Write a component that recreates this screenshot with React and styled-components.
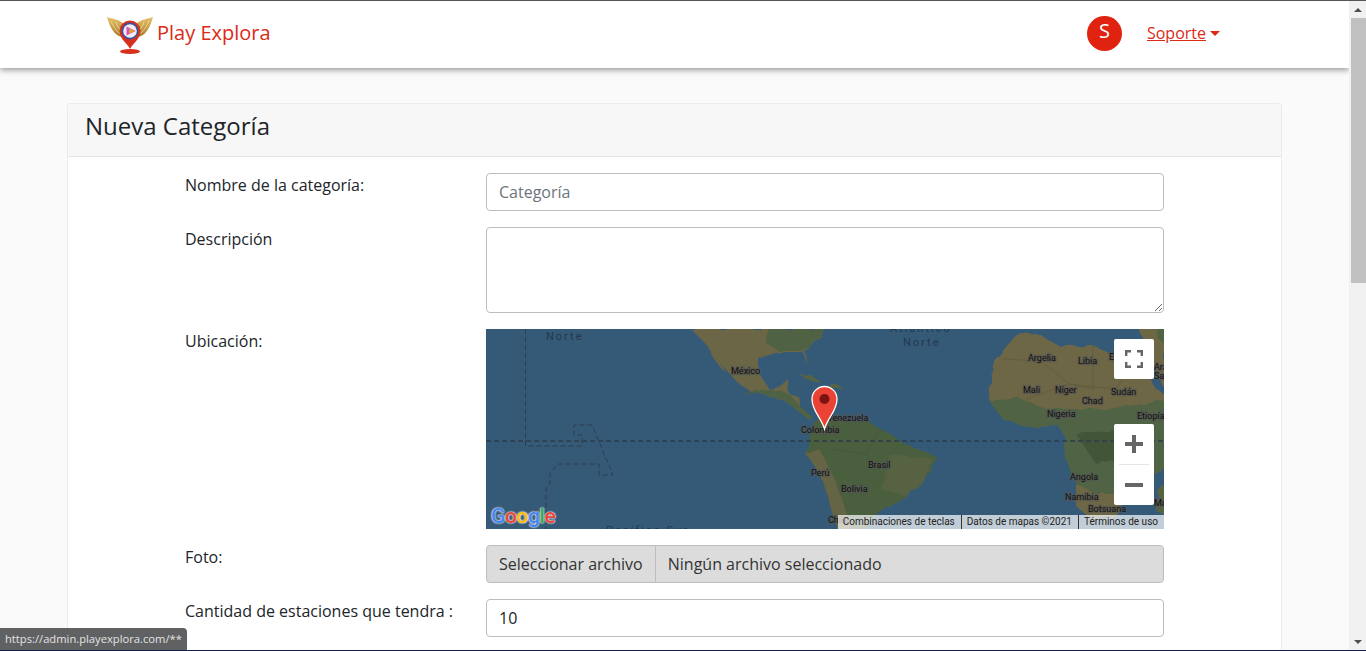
import React from "react";
import styled, { createGlobalStyle } from "styled-components";

const Global = createGlobalStyle`
  * { box-sizing: border-box; }
  html, body { margin: 0; height: 100%; overflow: hidden; }
  body {
    font-family: "Open Sans", "Liberation Sans", sans-serif;
    font-size: 16px;
    line-height: 1.5;
    color: #212529;
    background: #fafafa;
  }
`;

const Frame = styled.div`
  height: 100vh;
  display: flex;
  flex-direction: column;
  border-top: 1px solid #555;
  border-bottom: 1px solid #12204a;
`;

const Body = styled.div`
  flex: 1;
  min-height: 0;
  display: flex;
`;

const Viewport = styled.main`
  flex: 1;
  min-width: 0;
  overflow: hidden;
`;

const ScrollRail = styled.div`
  width: 17px;
  display: flex;
  flex-direction: column;
  background: #f1f1f1;
`;

const ScrollButton = styled.div`
  height: 17px;
  display: flex;
  align-items: center;
  justify-content: center;
  &::before {
    content: "";
    border-left: 4px solid transparent;
    border-right: 4px solid transparent;
    ${(p) => (p.$down ? "border-top: 4px solid #505050;" : "border-bottom: 4px solid #505050;")}
  }
`;

const ScrollThumb = styled.div`
  height: 265px;
  margin-left: 2px;
  background: #c1c1c1;
`;

const ScrollTrack = styled.div`
  flex: 1;
`;

const Nav = styled.nav`
  position: relative;
  z-index: 2;
  height: 67px;
  display: flex;
  align-items: center;
  justify-content: space-between;
  padding: 0 129px 3px 107px;
  background: white;
  box-shadow: 0 2px 6px rgba(0, 0, 0, 0.4);
`;

const Brand = styled.div`
  display: flex;
  align-items: center;
  gap: 4px;
  font-size: 20px;
  color: #dc2a16;
`;

const NavRight = styled.div`
  display: flex;
  align-items: center;
  gap: 25px;
`;

const Avatar = styled.div`
  width: 35px;
  height: 35px;
  border-radius: 50%;
  display: flex;
  align-items: center;
  justify-content: center;
  padding-bottom: 5px;
  background: #df2310;
  color: white;
  font-size: 20px;
`;

const Support = styled.a`
  display: flex;
  align-items: center;
  color: #dc2a16;
  text-decoration: underline;
  &::after {
    content: "";
    margin-left: 4px;
    border-top: 5px solid #dc2a16;
    border-left: 5px solid transparent;
    border-right: 5px solid transparent;
  }
`;

const Card = styled.section`
  margin: 35px 67px 0;
  background: white;
  border: 1px solid rgba(0, 0, 0, 0.08);
  border-radius: 4px;
`;

const CardHeader = styled.header`
  height: 53px;
  padding: 8px 17px 0;
  background: #f7f7f7;
  border-bottom: 1px solid rgba(0, 0, 0, 0.07);
  border-radius: 4px 4px 0 0;
`;

const Title = styled.h4`
  margin: 0;
  font-size: 24px;
  font-weight: 400;
  line-height: 1.2;
`;

const Form = styled.form`
  padding: 16px 0 16px 117px;
  display: grid;
  grid-template-columns: 301px 678px;
  row-gap: 16px;
`;

const Label = styled.label`
  display: block;
`;

const fieldBase = `
  display: block;
  width: 100%;
  padding: 6px 12px;
  border: 1px solid #bdbdbd;
  border-radius: 4px;
  font: inherit;
  color: #212529;
  background: white;
  outline: none;
`;

const Input = styled.input`
  ${fieldBase}
  height: 38px;
  &::placeholder { color: #6c757d; opacity: 1; }
`;

const TextArea = styled.textarea`
  ${fieldBase}
  height: 86px;
  resize: vertical;
`;

const FileBox = styled.div`
  height: 38px;
  display: flex;
  align-items: center;
  background: #dcdcdc;
  border: 1px solid #bdbdbd;
  border-radius: 4px;
  color: #333;
`;

const FileButton = styled.span`
  height: 100%;
  display: flex;
  align-items: center;
  padding: 0 12px;
  border-right: 1px solid #bdbdbd;
`;

const FileName = styled.span`
  padding: 0 12px;
`;

const MapBox = styled.div`
  position: relative;
  height: 200px;
  overflow: hidden;
  background: #355a78;
`;

const MapArt = styled.svg`
  display: block;
  width: 678px;
  height: 200px;
`;

const MapText = styled.text`
  font-family: Roboto, "Liberation Sans", sans-serif;
  font-size: 9px;
  fill: #101010;
  stroke: rgba(85, 85, 85, 0.6);
  stroke-width: 2.5px;
  paint-order: stroke;
`;

const SeaText = styled.text`
  font-family: Roboto, "Liberation Sans", sans-serif;
  font-size: 11px;
  letter-spacing: 2px;
  fill: #23384c;
`;

const MapControl = styled.div`
  position: absolute;
  right: 10px;
  top: ${(p) => p.$top}px;
  width: 40px;
  height: ${(p) => p.$height}px;
  display: flex;
  flex-direction: column;
  align-items: center;
  justify-content: center;
  background: white;
  border-radius: 2px;
`;

const ZoomPart = styled.div`
  flex: 1;
  width: 100%;
  display: flex;
  align-items: center;
  justify-content: center;
`;

const ZoomLine = styled.div`
  width: 30px;
  height: 1px;
  background: #e6e6e6;
`;

const GoogleLogo = styled.div`
  position: absolute;
  left: 5px;
  bottom: -1px;
  font-family: Roboto, "Liberation Sans", sans-serif;
  font-size: 21px;
  font-weight: 500;
  letter-spacing: -0.4px;
  line-height: 28px;
  text-shadow: 0 0 2px #ddd, 0 0 2px #ddd, 0 0 1px #fff;
`;

const Letter = styled.span`
  color: ${(p) => p.$color};
`;

const Attribution = styled.div`
  position: absolute;
  right: 0;
  bottom: 0;
  height: 14px;
  display: flex;
  align-items: center;
  background: rgba(255, 255, 255, 0.7);
  font-family: Roboto, "Liberation Sans", sans-serif;
  font-size: 10px;
  line-height: 14px;
  color: #222;
`;

const AttrItem = styled.span`
  padding: 0 6px 0 5px;
  & + & { border-left: 1px solid #333; }
`;

const StatusBubble = styled.div`
  position: fixed;
  left: 0;
  bottom: 1px;
  z-index: 5;
  height: 22px;
  padding: 1px 5px 0;
  display: flex;
  align-items: center;
  background: #5f6163;
  border-radius: 0 4px 0 0;
  color: #e4e4e4;
  font-size: 11.2px;
`;

const land = [
  ["Venezuela", 341, 92],
  ["México", 245, 45],
  ["Colombia", 315, 104],
  ["Perú", 325, 147],
  ["Brasil", 382, 139],
  ["Bolivia", 355, 163],
  ["Chile", 342, 194],
  ["Argelia", 542, 32],
  ["Libia", 592, 35],
  ["Egipto", 623, 31],
  ["Mali", 537, 64],
  ["Níger", 569, 64],
  ["Sudán", 625, 66],
  ["Chad", 596, 75],
  ["Nigeria", 561, 88],
  ["Etiopía", 651, 90],
  ["Angola", 584, 151],
  ["Namibia", 579, 171],
  ["Botsuana", 602, 183],
  ["Arabia", 668, 41],
  ["Saudí", 668, 50],
  ["Madagascar", 668, 177],
];

function Logo() {
  return (
    <svg width="46" height="42" viewBox="0 0 46 42">
      <defs>
        <linearGradient id="wing" x1="0" y1="0" x2="0" y2="1">
          <stop offset="0" stopColor="#e6c46a" />
          <stop offset="1" stopColor="#a87a28" />
        </linearGradient>
      </defs>
      <path d="M0 5 C6 7 11 7 17 12 L15 25 C8 24 3 16 0 5Z" fill="url(#wing)" />
      <path d="M46 5 C40 7 35 7 29 12 L31 25 C38 24 43 16 46 5Z" fill="url(#wing)" />
      <path d="M4 9 C7 16 10 20 14 22 M9 10 C10 14 12 17 15 19" stroke="#f3e0a4" strokeWidth="0.8" fill="none" />
      <path d="M42 9 C39 16 36 20 32 22 M37 10 C36 14 34 17 31 19" stroke="#f3e0a4" strokeWidth="0.8" fill="none" />
      <path d="M23 37 C20 31 12.5 27 12.5 19 A10.5 10.5 0 0 1 33.5 19 C33.5 27 26 31 23 37Z" fill="#d8301c" />
      <circle cx="23" cy="19" r="8.5" fill="#3a4fa0" />
      <circle cx="23" cy="19" r="6.8" fill="#f2eef2" />
      <path d="M19.5 14.5 L28.5 19 L19.5 23.5Z" fill="#d94fc0" />
      <path d="M22 16.5 L28.5 19 L22 21.5Z" fill="#e0a030" />
      <ellipse cx="23" cy="39.5" rx="10" ry="2.4" fill="#d8301c" />
    </svg>
  );
}

function WorldMap() {
  return (
    <MapArt viewBox="0 0 678 200">
      <defs>
        <filter id="soft" x="0" y="0" width="100%" height="100%" colorInterpolationFilters="sRGB">
          <feTurbulence type="fractalNoise" baseFrequency="0.09" numOctaves="2" seed="4" result="noise" />
          <feDisplacementMap in="SourceGraphic" in2="noise" scale="5" />
          <feGaussianBlur stdDeviation="0.5" />
        </filter>
      </defs>
      <g filter="url(#soft)">
        <path
          d="M205 0 L218 13 L224 20 L233 33 L243 44 L252 54 L264 62 L277 65 L292 70 L300 72 L312 82 L322 90 L326 88 L315 80 L313 68 L303 65 L302 50 L293 58 L283 60 L273 43 L273 30 L277 28 L293 23 L317 23 L322 37 L319 23 L333 10 L340 0 Z"
          fill="#6a6646"
        />
        <path d="M284 0 L340 0 L333 10 L319 22 L293 22 L280 14 Z" fill="#4f6344" />
        <path d="M255 64 L277 65 L300 72 L322 90 L326 88 L315 78 L303 65 L283 60 Z" fill="#4f6344" />
        <path d="M222 17 L228 24 L240 44 L234 38 L225 25 Z" fill="#6a6646" />
        <path d="M311 45 L325 46 L337 54 L322 50 Z" fill="#566444" />
        <path d="M343 56 L352 56 L357 59 L346 60 Z" fill="#566444" />
        <path
          d="M326 95 L335 88 L350 90 L383 93 L407 107 L418 115 L450 127 L447 138 L440 150 L420 167 L397 180 L385 190 L380 200 L352 200 L345 180 L340 160 L333 143 L320 125 L323 112 Z"
          fill="#4a5f3e"
        />
        <path d="M320 125 L333 120 L345 142 L356 170 L366 200 L352 200 L345 180 L340 160 L333 143 Z" fill="#656444" />
        <path d="M405 125 L447 130 L440 150 L420 167 L395 160 Z" fill="#566242" />
        <path
          d="M533 3 L553 5 L573 17 L607 17 L630 27 L652 27 L655 35 L670 60 L678 65 L678 140 L650 150 L640 170 L628 188 L605 190 L590 177 L590 150 L578 127 L580 110 L573 97 L540 98 L517 90 L503 70 L507 33 Z"
          fill="#6e6746"
        />
        <path
          d="M503 72 L530 68 L560 80 L620 80 L678 72 L678 140 L650 150 L640 165 L610 165 L590 155 L578 127 L580 110 L573 97 L540 98 L517 90 Z"
          fill="#506344"
        />
        <path d="M590 105 L640 100 L650 125 L610 135 Z" fill="#435539" />
        <path d="M652 0 L678 0 L678 60 L672 45 L664 28 L658 10 Z" fill="#6e6746" />
        <path d="M672 0 L678 0 L678 14 L670 8 Z" fill="#506344" />
        <path d="M672 162 L680 154 L680 186 L670 182 Z" fill="#566444" />
      </g>
      <g fill="none" stroke="#2e3c4c" strokeDasharray="5 3">
        <path d="M0 112 H678" strokeWidth="1.4" />
        <path d="M39.5 0 V117 H96 V106 H88 V96 H106 L127 146 H113 V135 H72 L64 144 V155 L60 160 V200" />
      </g>
      <g fill="none" stroke="#4a4a36" strokeWidth="0.5" opacity="0.7">
        <path d="M517 30 L555 32 L583 55 L607 60 L607 17" />
        <path d="M540 70 L583 55 L630 60 L640 45" />
        <path d="M380 125 L400 150 L375 170 M345 120 L380 125 L395 100" />
      </g>
      {land.map(([name, x, y]) => (
        <MapText key={name} x={x} y={y}>
          {name}
        </MapText>
      ))}
      <SeaText x="60" y="11">Norte</SeaText>
      <SeaText x="404" y="3">Atlántico</SeaText>
      <SeaText x="417" y="17">Norte</SeaText>
      <SeaText x="120" y="205">Pacífico Sur</SeaText>
      <path
        d="M338.5 100 C335 88 326 82 326 70 A12.5 12.5 0 1 1 351 70 C351 82 342 88 338.5 100Z"
        fill="#ea4335"
        stroke="white"
        strokeWidth="1.3"
      />
      <circle cx="338.5" cy="70" r="5" fill="#7a1410" />
    </MapArt>
  );
}

function App() {
  return (
    <>
      <Global />
      <Frame>
        <Body>
          <Viewport>
            <Nav>
              <Brand>
                <Logo />
                <span>Play Explora</span>
              </Brand>
              <NavRight>
                <Avatar>S</Avatar>
                <Support>Soporte</Support>
              </NavRight>
            </Nav>
            <Card>
              <CardHeader>
                <Title>Nueva Categoría</Title>
              </CardHeader>
              <Form>
                <Label>Nombre de la categoría:</Label>
                <Input placeholder="Categoría" />
                <Label>Descripción</Label>
                <TextArea />
                <Label>Ubicación:</Label>
                <MapBox>
                  <WorldMap />
                  <MapControl $top={10} $height={40}>
                    <svg width="18" height="18" viewBox="0 0 18 18" fill="none" stroke="#666" strokeWidth="2.4">
                      <path d="M1.2 6 V1.2 H6 M12 1.2 H16.8 V6 M16.8 12 V16.8 H12 M6 16.8 H1.2 V12" />
                    </svg>
                  </MapControl>
                  <MapControl $top={95} $height={81}>
                    <ZoomPart>
                      <svg width="18" height="18" viewBox="0 0 18 18" fill="#666">
                        <path d="M7 0 H11 V7 H18 V11 H11 V18 H7 V11 H0 V7 H7Z" />
                      </svg>
                    </ZoomPart>
                    <ZoomLine />
                    <ZoomPart>
                      <svg width="18" height="18" viewBox="0 0 18 18" fill="#666">
                        <path d="M0 7 H18 V11 H0Z" />
                      </svg>
                    </ZoomPart>
                  </MapControl>
                  <GoogleLogo>
                    <Letter $color="#4285f4">G</Letter>
                    <Letter $color="#ea4335">o</Letter>
                    <Letter $color="#fbbc05">o</Letter>
                    <Letter $color="#4285f4">g</Letter>
                    <Letter $color="#34a853">l</Letter>
                    <Letter $color="#ea4335">e</Letter>
                  </GoogleLogo>
                  <Attribution>
                    <AttrItem>Combinaciones de teclas</AttrItem>
                    <AttrItem>Datos de mapas ©2021</AttrItem>
                    <AttrItem>Términos de uso</AttrItem>
                  </Attribution>
                </MapBox>
                <Label>Foto:</Label>
                <FileBox>
                  <FileButton>Seleccionar archivo</FileButton>
                  <FileName>Ningún archivo seleccionado</FileName>
                </FileBox>
                <Label>Cantidad de estaciones que tendra :</Label>
                <Input defaultValue="10" />
              </Form>
            </Card>
          </Viewport>
          <ScrollRail>
            <ScrollButton />
            <ScrollThumb />
            <ScrollTrack />
            <ScrollButton $down />
          </ScrollRail>
        </Body>
        <StatusBubble>https://admin.playexplora.com/**</StatusBubble>
      </Frame>
    </>
  );
}

export default App;
